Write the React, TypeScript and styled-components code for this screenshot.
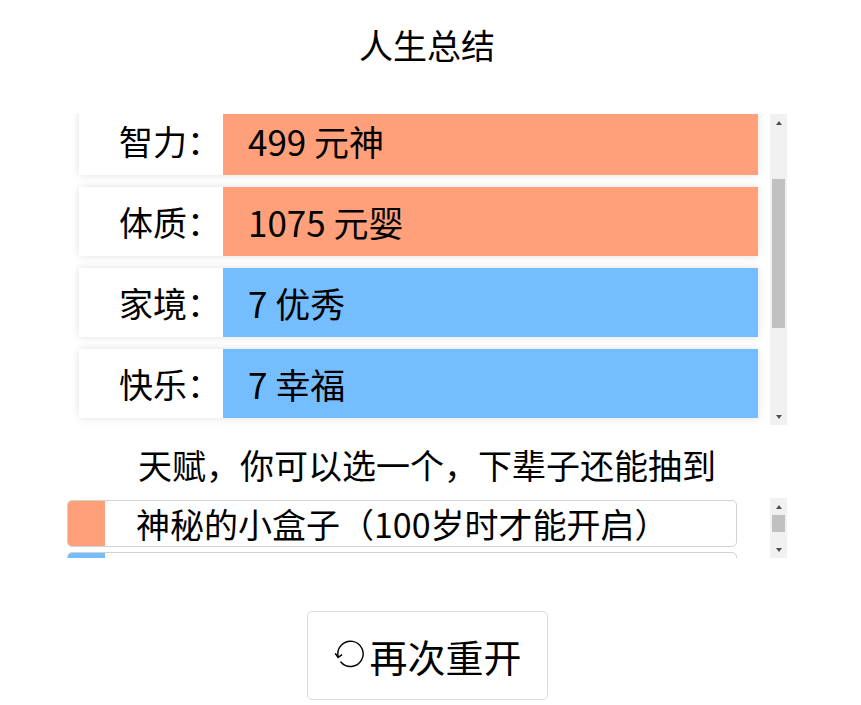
import React, { useLayoutEffect, useRef, useState } from 'react'
import styled, { createGlobalStyle } from 'styled-components'

const GlobalStyle = createGlobalStyle`
  html, body {
    margin: 0;
    padding: 0;
    background: #fff;
  }
  body {
    font-family: "Noto Sans CJK SC", "Noto Sans", sans-serif;
    color: #000;
  }
`

const grades: Record<string, string> = {
  low: '#ffa07a',
  mid: '#74bdff',
  high: '#d3a4ff',
}

type Grade = keyof typeof grades

const Page = styled.main`
  width: 854px;
  height: 705px;
  display: flex;
  flex-direction: column;
  align-items: center;
`

const Title = styled.h1`
  margin: 20px 0 0;
  font-size: 34px;
  font-weight: 400;
  line-height: 50px;
`

const Frame = styled.div<{ $height: number; $top: number }>`
  display: flex;
  width: 720px;
  height: ${(p) => p.$height}px;
  margin-top: ${(p) => p.$top}px;
`

/* classic scrollbar, drawn beside a list whose overflow is hidden */
const Bar = styled.div`
  flex: 0 0 17px;
  display: flex;
  flex-direction: column;
  background: #f1f1f1;
`

const BarButton = styled.div<{ $dir: 'up' | 'down' }>`
  flex: 0 0 17px;
  display: flex;
  align-items: center;
  justify-content: center;
  &::before {
    content: '';
    width: 0;
    height: 0;
    border-left: 3.5px solid transparent;
    border-right: 3.5px solid transparent;
    ${(p) => (p.$dir === 'up' ? 'border-bottom: 4px solid #505050;' : 'border-top: 4px solid #505050;')}
  }
`

const BarTrack = styled.div`
  flex: 1;
  padding: 0 2px;
`

const BarThumb = styled.div`
  background: #c1c1c1;
`

const PropertyList = styled.ul`
  list-style: none;
  box-sizing: border-box;
  flex: 1;
  margin: 0;
  padding: 12px;
  overflow: hidden;
  display: flex;
  flex-direction: column;
  gap: 12px;
`

const PropertyRow = styled.li`
  flex: 0 0 69px;
  display: flex;
  background: #fff;
  box-shadow: 0 0 8px rgba(0, 0, 0, 0.12);
  font-size: 34px;
  line-height: 69px;
`

const PropertyLabel = styled.span`
  flex: 0 0 144px;
  box-sizing: border-box;
  padding-right: 2px;
  text-align: right;
`

const PropertyValue = styled.span<{ $grade: Grade }>`
  flex: 1;
  padding-left: 25px;
  font-size: 35px;
  background: ${(p) => grades[p.$grade]};
`

const SubTitle = styled.h2`
  margin: 20px 0 0;
  font-size: 34px;
  font-weight: 400;
  line-height: 40px;
`

const TalentList = styled.ul`
  list-style: none;
  box-sizing: border-box;
  flex: 1;
  margin: 0;
  padding: 2px 33px 0 0;
  overflow: hidden;
  display: flex;
  flex-direction: column;
  gap: 5px;
`

const TalentItem = styled.li`
  flex: 0 0 47px;
  box-sizing: border-box;
  display: flex;
  border: 1px solid #d2d2d2;
  border-radius: 5px;
  overflow: hidden;
  font-size: 34px;
  line-height: 45px;
`

const TalentMark = styled.span<{ $grade: Grade }>`
  flex: 0 0 38px;
  margin: -1px 0 -1px -1px;
  background: ${(p) => grades[p.$grade]};
`

const TalentText = styled.span`
  padding-left: 31px;
  white-space: nowrap;
`

const RestartButton = styled.button`
  margin-top: 53px;
  width: 241px;
  height: 89px;
  display: flex;
  align-items: center;
  justify-content: center;
  gap: 2px;
  padding: 0 0 0 2px;
  background: #fff;
  border: 1px solid #dcdcdc;
  border-radius: 5px;
  font-family: inherit;
  font-size: 38px;
  color: #000;
  cursor: pointer;
`

const RestartIcon = () => (
  <svg width="33" height="31" viewBox="-2 -1 30 28" fill="none" stroke="#000" strokeWidth="1.3" strokeLinecap="round">
    <path d="M1.67 13.5 A11.5 11.5 0 1 1 4.19 18.9" />
    <path d="M-0.6 11.4 L1.7 14.8 L5 12.4" />
  </svg>
)

type Thumb = { top: number; height: number }

function useScrollThumb(scrollTop: number, minThumb = 17) {
  const ref = useRef<HTMLUListElement>(null)
  const [thumb, setThumb] = useState<Thumb>({ top: 0, height: 0 })

  useLayoutEffect(() => {
    const el = ref.current
    if (!el) return
    el.scrollTop = scrollTop
    const track = el.clientHeight - 34
    const height = Math.max(minThumb, (track * el.clientHeight) / el.scrollHeight)
    const top = (el.scrollTop / el.scrollHeight) * track
    setThumb({ top, height })
  }, [scrollTop, minThumb])

  return { ref, thumb }
}

const Scrollbar = ({ thumb }: { thumb: Thumb }) => (
  <Bar>
    <BarButton $dir="up" />
    <BarTrack>
      <BarThumb style={{ marginTop: thumb.top, height: thumb.height }} />
    </BarTrack>
    <BarButton $dir="down" />
  </Bar>
)

const properties: { label: string; value: string; grade: Grade }[] = [
  { label: '颜值', value: '8 美丽', grade: 'mid' },
  { label: '智力', value: '499 元神', grade: 'low' },
  { label: '体质', value: '1075 元婴', grade: 'low' },
  { label: '家境', value: '7 优秀', grade: 'mid' },
  { label: '快乐', value: '7 幸福', grade: 'mid' },
  { label: '享年', value: '101 仙寿', grade: 'high' },
  { label: '总评', value: '1696 传说', grade: 'high' },
]

const talents: { name: string; grade: Grade }[] = [
  { name: '神秘的小盒子（100岁时才能开启）', grade: 'low' },
  { name: '天赋异禀（初始可用属性点+2）', grade: 'mid' },
]

export default function App() {
  const props = useScrollThumb(101)
  const talentScroll = useScrollThumb(0)

  return (
    <>
      <GlobalStyle />
      <Page>
        <Title>人生总结</Title>
        <Frame $height={311} $top={44}>
          <PropertyList ref={props.ref}>
            {properties.map((p) => (
              <PropertyRow key={p.label}>
                <PropertyLabel>{p.label}：</PropertyLabel>
                <PropertyValue $grade={p.grade}>{p.value}</PropertyValue>
              </PropertyRow>
            ))}
          </PropertyList>
          <Scrollbar thumb={props.thumb} />
        </Frame>
        <SubTitle>天赋，你可以选一个，下辈子还能抽到</SubTitle>
        <Frame $height={60} $top={13}>
          <TalentList ref={talentScroll.ref}>
            {talents.map((t) => (
              <TalentItem key={t.name}>
                <TalentMark $grade={t.grade} />
                <TalentText>{t.name}</TalentText>
              </TalentItem>
            ))}
          </TalentList>
          <Scrollbar thumb={talentScroll.thumb} />
        </Frame>
        <RestartButton>
          <RestartIcon />
          再次重开
        </RestartButton>
      </Page>
    </>
  )
}
